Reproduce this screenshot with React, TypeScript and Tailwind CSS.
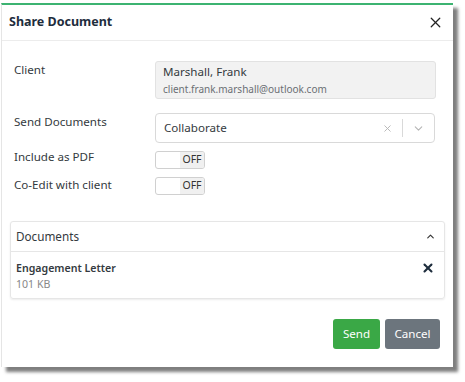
import { ChevronDown, ChevronUp, X } from "lucide-react";

function Toggle() {
  return (
    <div className="flex h-[18px] w-[50px] overflow-hidden rounded-[3px] border border-[#d0d0d0] bg-white">
      <div className="w-[24px]" />
      <div className="flex flex-1 items-center justify-center bg-[#f0f0f0] text-[10.5px] text-[#333]">
        OFF
      </div>
    </div>
  );
}

function Row({
  label,
  children,
  shift = "",
}: {
  label: string;
  children: React.ReactNode;
  shift?: string;
}) {
  return (
    <div className="flex">
      <div className={`w-[141px] shrink-0 text-[11.6px] leading-[18px] text-[#343a40] ${shift}`}>
        {label}
      </div>
      <div className="flex-1">{children}</div>
    </div>
  );
}

export default function App() {
  return (
    <div
      className="h-[382px] w-[465px] bg-white pl-px pt-[3px]"
      style={{ fontFamily: '"Noto Sans", "Open Sans", sans-serif' }}
    >
      <div className="flex h-[364px] w-[452px] flex-col border-t-2 border-l border-[#3cb371] border-l-[#e5e5e5] bg-white shadow-[5px_5px_3px_rgba(0,0,0,0.5)]">
        <div className="flex h-[36px] items-center justify-between border-b border-[#ececec] pl-[7px] pr-[9px]">
          <span className="text-[12.5px] font-bold text-[#1e2d3d]">Share Document</span>
          <X className="h-[17px] w-[17px] text-[#222]" strokeWidth={1.8} />
        </div>

        <div className="flex flex-col pl-[12px] pr-[17px] pt-[20px]">
          <Row label="Client">
            <div className="flex h-[38px] flex-col justify-center rounded-[3px] border border-[#e2e2e2] bg-[#f2f2f2] px-[7px]">
              <div className="text-[11.6px] leading-[18px] text-[#343a40]">Marshall, Frank</div>
              <div className="text-[10px] leading-[16px] text-[#6b6f74]">
                client.frank.marshall@outlook.com
              </div>
            </div>
          </Row>
          <div className="h-[14px]" />
          <Row label="Send Documents">
            <div className="mr-px flex h-[30px] items-center rounded-[4px] border border-[#d9d9d9] bg-white pl-[8px]">
              <span className="flex-1 text-[11.6px] text-[#343a40]">Collaborate</span>
              <X className="h-[11px] w-[11px] text-[#b5b5b5]" strokeWidth={2} />
              <div className="mx-[9px] h-[18px] w-px bg-[#d9d9d9]" />
              <ChevronDown className="mr-[9px] h-[13px] w-[13px] text-[#b5b5b5]" strokeWidth={2} />
            </div>
          </Row>
          <div className="h-[8px]" />
          <Row label="Include as PDF" shift="-mt-[3px]">
            <Toggle />
          </Row>
          <div className="h-[8px]" />
          <Row label="Co-Edit with client" shift="-mt-[1px]">
            <Toggle />
          </Row>
        </div>

        <div className="mx-[8px] mt-[26px] rounded-[3px] border border-[#e6e6e6] shadow-[0_1px_2px_rgba(0,0,0,0.08)]">
          <div className="flex h-[30px] items-center justify-between border-b border-[#e6e6e6] pl-[5px] pr-[8px]">
            <span className="text-[11.7px] text-[#343a40]">Documents</span>
            <ChevronUp className="h-[11px] w-[11px] text-[#333]" strokeWidth={2.5} />
          </div>
          <div className="flex h-[46px] items-start justify-between pl-[5px] pr-[9px] pt-[8px]">
            <div>
              <div className="text-[10.6px] font-semibold leading-[16px] text-[#343a40]">
                Engagement Letter
              </div>
              <div className="text-[10.6px] leading-[16px] text-[#888]">101 KB</div>
            </div>
            <X className="mt-[1px] h-[14px] w-[14px] text-[#1e2d3d]" strokeWidth={3.5} />
          </div>
        </div>

        <div className="mt-[20px] flex justify-end gap-[5px] pr-[13px]">
          <button className="h-[30px] w-[47px] rounded-[3px] bg-[#3aa846] text-[11.6px] text-white">
            Send
          </button>
          <button className="h-[30px] w-[55px] rounded-[3px] bg-[#6c757d] text-[11.6px] text-white">
            Cancel
          </button>
        </div>
      </div>
    </div>
  );
}
